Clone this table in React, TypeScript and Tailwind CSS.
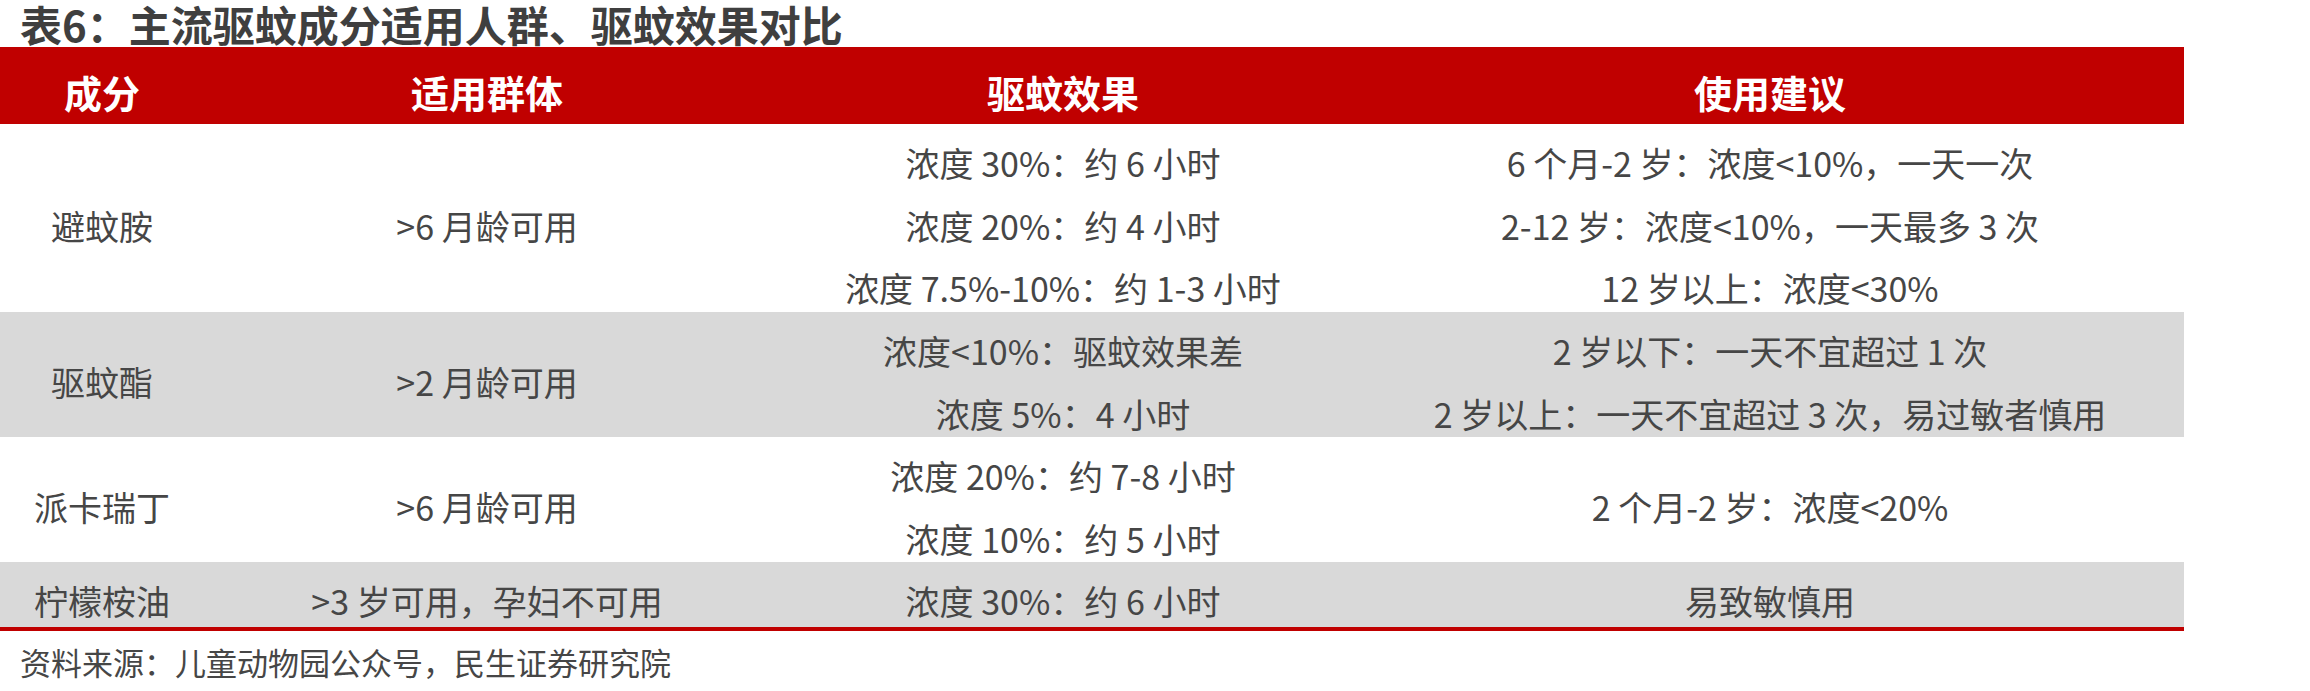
import React from 'react';

type Row = {
  name: string;
  group: string;
  effect: string[];
  advice: string[];
  height: string;
  shaded: boolean;
};

const ROWS: Row[] = [
  {
    name: '避蚊胺',
    group: '>6 月龄可用',
    effect: ['浓度 30%：约 6 小时', '浓度 20%：约 4 小时', '浓度 7.5%-10%：约 1-3 小时'],
    advice: ['6 个月-2 岁：浓度<10%，一天一次', '2-12 岁：浓度<10%，一天最多 3 次', '12 岁以上：浓度<30%'],
    height: 'h-[188px]',
    shaded: false,
  },
  {
    name: '驱蚊酯',
    group: '>2 月龄可用',
    effect: ['浓度<10%：驱蚊效果差', '浓度 5%：4 小时'],
    advice: ['2 岁以下：一天不宜超过 1 次', '2 岁以上：一天不宜超过 3 次，易过敏者慎用'],
    height: 'h-[125px]',
    shaded: true,
  },
  {
    name: '派卡瑞丁',
    group: '>6 月龄可用',
    effect: ['浓度 20%：约 7-8 小时', '浓度 10%：约 5 小时'],
    advice: ['2 个月-2 岁：浓度<20%'],
    height: 'h-[125px]',
    shaded: false,
  },
  {
    name: '柠檬桉油',
    group: '>3 岁可用，孕妇不可用',
    effect: ['浓度 30%：约 6 小时'],
    advice: ['易致敏慎用'],
    height: 'h-[65px]',
    shaded: true,
  },
];

const HEADERS = ['成分', '适用群体', '驱蚊效果', '使用建议'];

function Cell({ lines }: { lines: string[] }) {
  return (
    <div className="flex flex-col items-center justify-center pt-[8px]">
      {lines.map((l) => (
        <span key={l} className="whitespace-nowrap text-[34px] leading-[62.5px]">
          {l}
        </span>
      ))}
    </div>
  );
}

export default function App() {
  return (
    <div
      className="h-[691px] w-[2310px] overflow-hidden bg-white text-[#464646]"
      style={{ fontFamily: '"Noto Sans CJK SC", "Noto Sans", sans-serif' }}
    >
      <div className="flex h-[47px] items-center whitespace-nowrap pl-5 text-[42px] font-bold leading-[47px] text-[#3f3f3f]">
        表6：主流驱蚊成分适用人群、驱蚊效果对比
      </div>

      <div className="w-[2184px]">
        <div className="grid h-[77px] grid-cols-[204px_566px_586px_828px] bg-[#c00000] text-[38px] font-bold text-white">
          {HEADERS.map((h) => (
            <div key={h} className="flex items-center justify-center pt-[12px] leading-none">
              {h}
            </div>
          ))}
        </div>

        {ROWS.map((r) => (
          <div
            key={r.name}
            className={`grid grid-cols-[204px_566px_586px_828px] ${r.height} ${r.shaded ? 'bg-[#d9d9d9]' : 'bg-white'}`}
          >
            <Cell lines={[r.name]} />
            <Cell lines={[r.group]} />
            <Cell lines={r.effect} />
            <Cell lines={r.advice} />
          </div>
        ))}

        <div className="h-[4px] bg-[#c00000]" />
      </div>

      <div className="flex h-[60px] items-center pl-5 text-[31px] leading-none">
        资料来源：儿童动物园公众号，民生证券研究院
      </div>
    </div>
  );
}
